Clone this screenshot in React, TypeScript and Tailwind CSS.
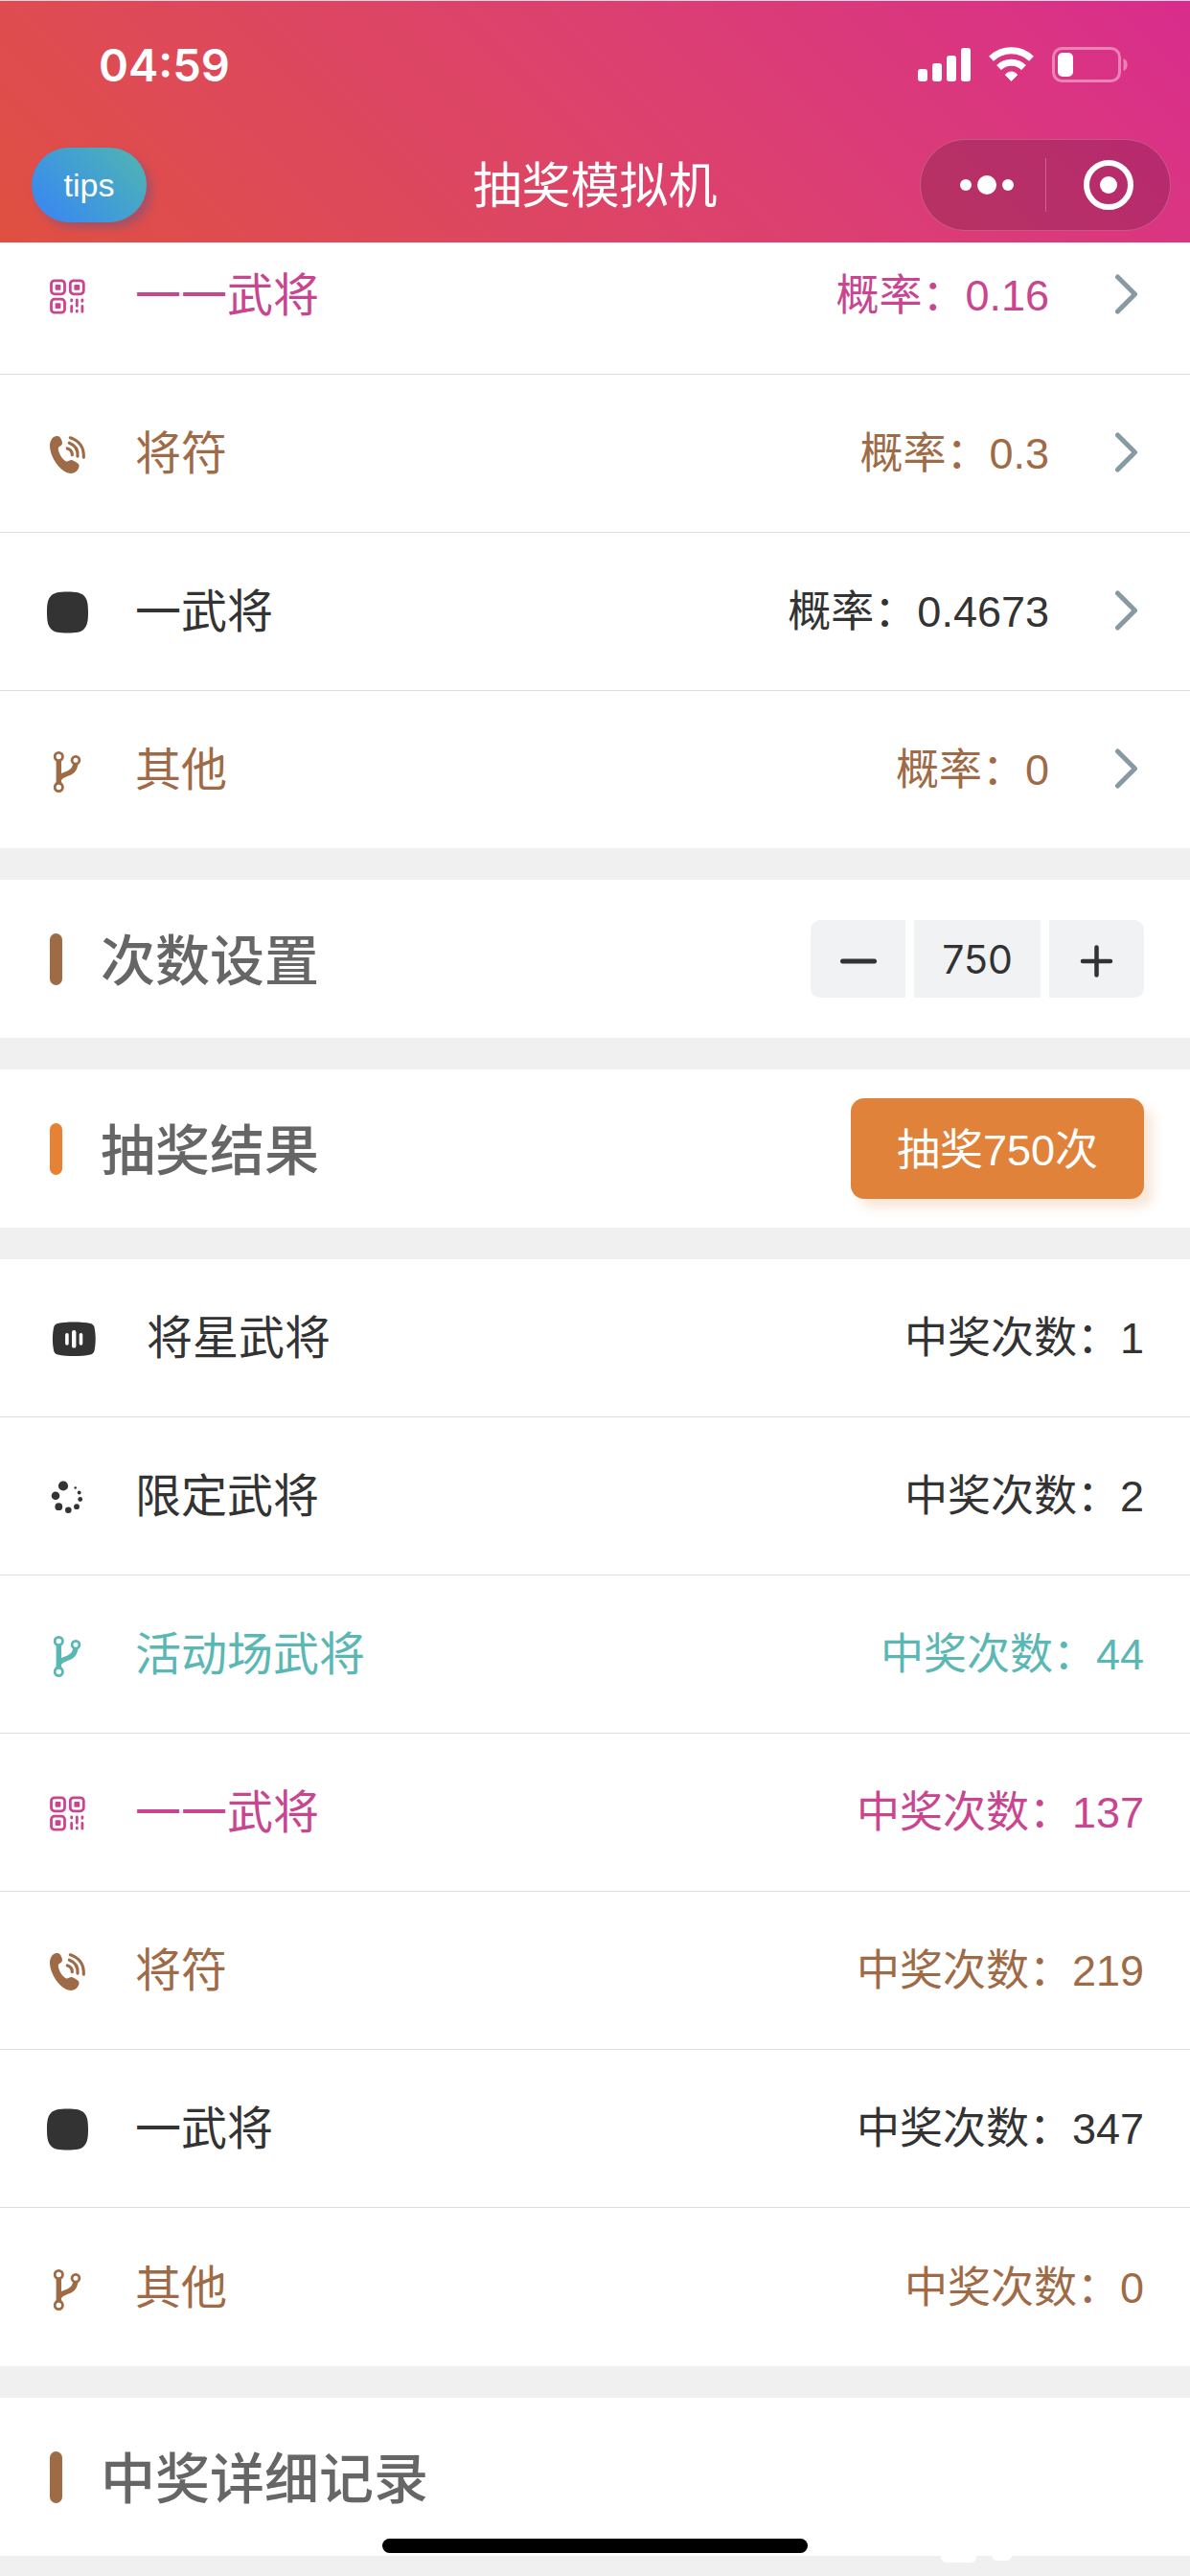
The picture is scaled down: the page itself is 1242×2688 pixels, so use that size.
import { useState } from 'react'
import type { ReactNode } from 'react'

type IconName = 'video' | 'loading' | 'fork' | 'qrcode' | 'phone' | 'square'

interface Prize {
  icon: IconName
  name: string
  value: string
  color: string
}

const odds: Prize[] = [
  { icon: 'qrcode', name: '一一武将', value: '0.16', color: 'text-[#c8468f]' },
  { icon: 'phone', name: '将符', value: '0.3', color: 'text-[#9f6b47]' },
  { icon: 'square', name: '一武将', value: '0.4673', color: 'text-[#333333]' },
  { icon: 'fork', name: '其他', value: '0', color: 'text-[#9f6b47]' }
]

const results: Prize[] = [
  { icon: 'video', name: '将星武将', value: '1', color: 'text-[#333333]' },
  { icon: 'loading', name: '限定武将', value: '2', color: 'text-[#333333]' },
  { icon: 'fork', name: '活动场武将', value: '44', color: 'text-[#5ab7b3]' },
  { icon: 'qrcode', name: '一一武将', value: '137', color: 'text-[#c8468f]' },
  { icon: 'phone', name: '将符', value: '219', color: 'text-[#9f6b47]' },
  { icon: 'square', name: '一武将', value: '347', color: 'text-[#333333]' },
  { icon: 'fork', name: '其他', value: '0', color: 'text-[#9f6b47]' }
]

const iconShapes: Record<IconName, ReactNode> = {
  video: (
    <>
      <path
        fill="currentColor"
        d="M29.300 5.500c7 0 12.500.5 17 1.500 2.400.6 3.700 2.100 4.300 4.500 1.500 7 1.500 16.500 0 23.500-.6 2.400-1.900 3.900-4.300 4.500-9 2-25 2-34 0-2.400-.6-3.700-2.100-4.300-4.500-1.500-7-1.500-16.500 0-23.500.6-2.400 1.900-3.900 4.300-4.500 4.500-1 10-1.500 17-1.500z"
      />
      <g stroke="white" strokeLinecap="round">
        <path d="M21.900 18.700v9.300M36.500 18.700v9.300" strokeWidth="3.600" />
        <path d="M29.200 16.200v14.200" strokeWidth="4.400" />
      </g>
    </>
  ),
  loading: (
    <g fill="currentColor">
      <circle cx="18" cy="11.500" r="5.100" />
      <circle cx="10" cy="21.800" r="4.300" />
      <circle cx="13.300" cy="33.200" r="3.900" />
      <circle cx="23.300" cy="36.800" r="3.300" />
      <circle cx="32" cy="33.200" r="2.900" />
      <circle cx="35.700" cy="25.500" r="2.400" />
      <circle cx="34.700" cy="18.500" r="1.900" />
      <circle cx="30.700" cy="13.500" r="1.300" />
    </g>
  ),
  fork: (
    <>
      <g fill="none" stroke="currentColor" strokeWidth="2.800">
        <circle cx="13.300" cy="8.500" r="4.100" />
        <circle cx="31" cy="12.200" r="3.900" />
        <circle cx="13.300" cy="40.500" r="4.100" />
      </g>
      <path
        fill="currentColor"
        d="M10.600 12h5.400v14c2-1 4.200-1.500 6.300-2.500 3.600-1.600 5.300-3.700 5.900-7.900h5.300c-.6 6.400-3.200 10.200-8.300 12.400-4 1.700-7.600 2.300-9.200 5.200v1.600l1.700 3.200-4.400-1-4.400 1 1.700-3.200z"
      />
    </>
  ),
  qrcode: (
    <>
      <g fill="none" stroke="currentColor" strokeWidth="2.800">
        <rect x="5.500" y="6.800" width="14" height="14" rx="3.500" />
        <rect x="25.300" y="6.800" width="14" height="14" rx="3.500" />
        <rect x="5.500" y="26.200" width="14" height="14" rx="3.500" />
      </g>
      <g fill="currentColor">
        <rect x="9.600" y="11" width="5.800" height="5.800" rx="1" />
        <rect x="29.400" y="11" width="5.800" height="5.800" rx="1" />
        <rect x="9.600" y="30.300" width="5.800" height="5.800" rx="1" />
      </g>
      <path
        stroke="currentColor"
        strokeWidth="2.800"
        strokeLinecap="round"
        d="M26.700 26.800v1.200M26.700 33.500v5.700M32.300 26.800v6.500M32.300 38.200v1M37.900 26.800v1.500M37.900 33.500v5.700"
      />
    </>
  ),
  phone: (
    <>
      <path
        fill="currentColor"
        d="M8.500 4.800c2.200-1.200 5.200-.9 6.500.9 1.300 1.900 2 4 2 5.800 0 3-4.400 3-4.200 5.700.3 4.500 3.700 10.300 7.700 13 2.500 1.600 4-2 7-1 2.200.8 4.900 2.300 6.400 4 1.700 2-.2 6-2.400 7.800-3.500 3-8.800 2.400-13.500-1C10.500 34.500 4.200 23.500 4 14.500c-.1-4 1.700-8.300 4.500-9.700z"
      />
      <path
        fill="none"
        stroke="currentColor"
        strokeWidth="3.200"
        strokeLinecap="round"
        d="M25.300 5.800c10 3.200 14.500 11 14 20.400M24.300 11.200c6.500 2.500 9.400 7.300 8.700 14M22.300 17c3.500 1.200 5.200 3.500 5 6.700"
      />
    </>
  ),
  square: (
    <path
      fill="currentColor"
      d="M22.500 1.500c9 0 14 .8 17.300 4.300C43.200 9.300 44 14.500 44 23s-.8 13.700-4.200 17.200c-3.300 3.500-8.300 4.300-17.300 4.300s-14-.8-17.300-4.300C1.800 36.700 1 31.500 1 23s.8-13.700 4.200-17.200c3.300-3.500 8.300-4.300 17.300-4.300z"
    />
  )
}

function PrizeIcon({ name }: { name: IconName }) {
  if (name === 'video') {
    return (
      <svg className="h-11 w-14 shrink-0 overflow-visible" viewBox="0 0 56 44" aria-hidden="true">
        {iconShapes.video}
      </svg>
    )
  }
  return (
    <svg className="size-11 shrink-0 overflow-visible" viewBox="0 0 44 44" aria-hidden="true">
      {iconShapes[name]}
    </svg>
  )
}

function PrizeLabel({ prize }: { prize: Prize }) {
  return (
    <span className="flex items-center gap-[49px]">
      <PrizeIcon name={prize.icon} />
      <span className="pt-[2px] text-[48px] leading-[64px]">{prize.name}</span>
    </span>
  )
}

function SectionTitle({ title, bar, children }: { title: string; bar: string; children?: ReactNode }) {
  return (
    <section className="flex h-[165px] items-center justify-between bg-white pr-12 pl-[52px]">
      <div className="flex items-center gap-10">
        <span className={`h-[54px] w-[13px] rounded-full ${bar}`} />
        <h2 className="pt-1 text-[57px] leading-[76px] font-medium text-[#666666]">{title}</h2>
      </div>
      {children}
    </section>
  )
}

function StatusIcons() {
  return (
    <svg className="h-10 w-[220px]" viewBox="0 0 220 40" aria-hidden="true">
      <g fill="white">
        <rect x="0" y="24" width="10" height="13" rx="3" />
        <rect x="15" y="18" width="10" height="19" rx="3" />
        <rect x="30" y="10" width="10" height="27" rx="3" />
        <rect x="45" y="2" width="10" height="35" rx="3" />
        <path d="M97.500 36.500l-6.200-6.500c3.500-4 8.900-4 12.400 0z" strokeLinejoin="round" stroke="white" strokeWidth="1" />
      </g>
      <g fill="none" stroke="white" strokeWidth="7">
        <path d="M76.500 13.200c12-11.300 30-11.300 42 0" />
        <path d="M84.500 22.500c7.500-7 18.500-7 26 0" />
      </g>
      <rect x="141.500" y="2.500" width="69" height="34" rx="9" fill="none" stroke="white" strokeOpacity="0.4" strokeWidth="3" />
      <rect x="146" y="7" width="16" height="25" rx="5" fill="white" />
      <path d="M214.500 13c5.500 2 5.500 11 0 13z" fill="white" fillOpacity="0.4" />
    </svg>
  )
}

export default function App() {
  const [count, setCount] = useState(750)

  return (
    <div
      lang="zh-CN"
      className="relative min-h-screen overflow-hidden bg-[#f0f0f0] font-['Liberation_Sans','Noto_Sans_CJK_SC',sans-serif]"
    >
      <header className="relative z-10 h-[253px] border-t border-[#f0d5e0] bg-linear-45 from-[#e05040] to-[#d92c8c] text-white">
        <div className="flex h-[134px] items-center justify-between pr-16 pl-[103px]">
          <time className="font-['Inter',sans-serif] text-[47px] leading-[56px] font-semibold">04:59</time>
          <StatusIcons />
        </div>
        <div className="grid h-[115px] grid-cols-[1fr_auto_1fr] items-center px-5">
          <button
            type="button"
            className="ml-[13px] h-[78px] w-[120px] justify-self-start rounded-full bg-linear-45 from-[#3b82f6] to-[#52b5ae] text-[34px] leading-[40px] shadow-[6px_6px_8px_rgba(60,90,150,0.35)]"
          >
            tips
          </button>
          <h1 className="pt-1 text-[51px] leading-[68px]">抽奖模拟机</h1>
          <div className="flex h-24 w-[262px] items-center justify-self-end rounded-full border border-white/20 bg-black/16">
            <button type="button" aria-label="更多" className="flex h-full w-[130px] items-center justify-center gap-[6px] pl-2">
              <span className="size-3 rounded-full bg-white" />
              <span className="size-5 rounded-full bg-white" />
              <span className="size-3 rounded-full bg-white" />
            </button>
            <span className="h-14 w-px bg-white/25" />
            <button type="button" aria-label="关闭" className="flex h-full flex-1 items-center justify-center">
              <span className="flex size-[52px] items-center justify-center rounded-full border-6 border-white">
                <span className="size-[18px] rounded-full bg-white" />
              </span>
            </button>
          </div>
        </div>
      </header>

      {/* the list is scrolled a little under the header */}
      <main className="-mt-[27px] flex flex-col gap-[33px]">
        <ul className="divide-y divide-[#dddddd] bg-white">
          {odds.map((prize) => (
            <li key={prize.name}>
              <button
                type="button"
                className={`flex h-[164px] w-full items-center justify-between pr-[47px] pl-12 ${prize.color}`}
              >
                <PrizeLabel prize={prize} />
                <span className="flex items-center gap-16 text-[45px] leading-[60px]">
                  <span className="pt-[2px]">概率：{prize.value}</span>
                  <svg className="h-11 w-9 text-[#8799a3]" viewBox="0 0 36 44" fill="none" aria-hidden="true">
                    <path
                      d="M7.500 3l18 18-18 18"
                      stroke="currentColor"
                      strokeWidth="5"
                      strokeLinecap="round"
                      strokeLinejoin="round"
                    />
                  </svg>
                </span>
              </button>
            </li>
          ))}
        </ul>

        <SectionTitle title="次数设置" bar="bg-[#9f6b47]">
          <div className="flex gap-[9px] font-['Inter',sans-serif] text-[#323233]">
            <button
              type="button"
              aria-label="减少"
              onClick={() => setCount(Math.max(1, count - 1))}
              className="flex h-[81px] w-[99px] items-center justify-center rounded-l-[10px] bg-[#f1f2f4]"
            >
              <svg className="size-10" viewBox="0 0 40 40" aria-hidden="true">
                <path d="M3.500 22h33" stroke="currentColor" strokeWidth="5" strokeLinecap="round" />
              </svg>
            </button>
            <input
              type="text"
              inputMode="numeric"
              aria-label="次数"
              value={count}
              onChange={(e) => setCount(Number(e.target.value) || 0)}
              className="h-[81px] w-[132px] bg-[#f1f2f4] text-center text-[41px]"
            />
            <button
              type="button"
              aria-label="增加"
              onClick={() => setCount(count + 1)}
              className="flex h-[81px] w-[99px] items-center justify-center rounded-r-[10px] bg-[#f1f2f4]"
            >
              <svg className="size-10" viewBox="0 0 40 40" aria-hidden="true">
                <path d="M5 22h29M19.500 7.500v29" stroke="currentColor" strokeWidth="4.500" strokeLinecap="round" />
              </svg>
            </button>
          </div>
        </SectionTitle>

        <SectionTitle title="抽奖结果" bar="bg-[#e58236]">
          <button
            type="button"
            className="h-[105px] w-[306px] rounded-[14px] bg-[#e0823a] pt-1 text-[45px] leading-[60px] text-white shadow-[9px_9px_12px_rgba(224,130,58,0.2)]"
          >
            抽奖{count}次
          </button>
        </SectionTitle>

        <ul className="divide-y divide-[#dddddd] bg-white">
          {results.map((prize) => (
            <li key={prize.name} className={`flex h-[165px] items-center justify-between px-12 ${prize.color}`}>
              <PrizeLabel prize={prize} />
              <span className="pt-[2px] text-[45px] leading-[60px]">中奖次数：{prize.value}</span>
            </li>
          ))}
        </ul>

        <SectionTitle title="中奖详细记录" bar="bg-[#9f6b47]" />
      </main>

      <div className="absolute right-[223px] bottom-[14px] h-3 w-[37px] rounded-full bg-white" />
      <div className="absolute right-[186px] bottom-4 h-3 w-[21px] rounded-full bg-white" />
      <div className="absolute bottom-6 left-1/2 h-[15px] w-[444px] -translate-x-1/2 rounded-full bg-black" />
    </div>
  )
}
